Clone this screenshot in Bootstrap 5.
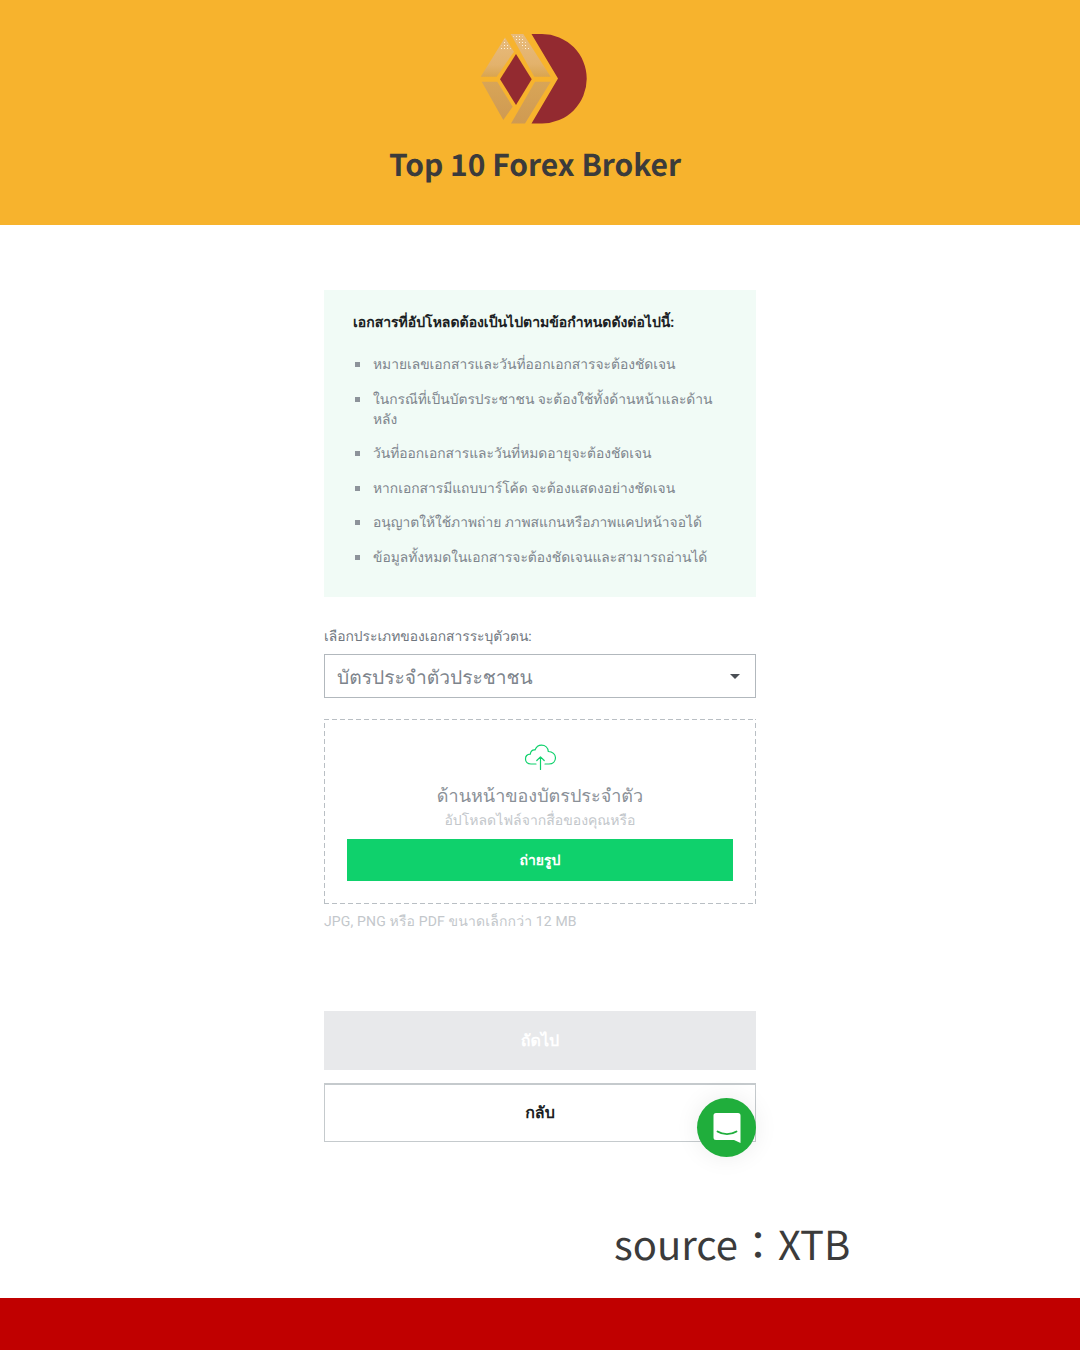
<!DOCTYPE html>
<html lang="th">
<head>
    <meta charset="UTF-8">
    <meta name="viewport" content="width=device-width, initial-scale=1.0">
    <title>Top 10 Forex Broker</title>
    <link href="https://cdn.jsdelivr.net/npm/bootstrap@5.3.2/dist/css/bootstrap.min.css" rel="stylesheet">
    <style>
        body {
            width: 1080px;
            height: 1350px;
            overflow: hidden;
            background: #fff;
            font-family: "Roboto", "Noto Sans", "Liberation Sans", sans-serif;
            text-rendering: geometricPrecision;
        }
        .top-band {
            height: 225px;
            background: #f7b32d;
            padding-top: 34px;
        }
        .top-band svg {
            display: block;
            margin-left: 480px;
        }
        .top-title {
            margin: 17px 0 0 -10px;
            font-family: "Noto Sans CJK SC", sans-serif;
            font-size: 30px;
            line-height: 44px;
            font-weight: 700;
            color: #3b3b3b;
        }
        .form-col {
            width: 432px;
            margin: 65px 0 0 324px;
            position: relative;
        }
        .req-panel {
            height: 307px;
            background: #f1fbf6;
            padding: 23px 29px;
        }
        .req-title {
            font-size: 14px;
            line-height: 20px;
            font-weight: 700;
            color: #1c1f24;
            margin-bottom: 22px;
        }
        .req-list {
            list-style: none;
            padding: 0;
            margin: 0;
        }
        .req-list li {
            position: relative;
            padding-left: 20px;
            margin-bottom: 14.5px;
            font-size: 13.8px;
            line-height: 20px;
            color: #7d848c;
        }
        .req-list li::before {
            content: "";
            position: absolute;
            left: 2px;
            top: 7px;
            width: 5px;
            height: 5px;
            background: #8d939a;
        }
        .doc-label {
            margin: 30px 0 7px;
            font-size: 13.8px;
            line-height: 20px;
            color: #6f767e;
        }
        .doc-select {
            height: 44px;
            border: 1px solid #b2b8bd;
            padding: 0 13px 0 12px;
            font-size: 19.2px;
            line-height: 44px;
            color: #7d848c;
        }
        .doc-select span {
            padding-top: 4px;
        }
        .doc-select i {
            border-left: 5px solid transparent;
            border-right: 5px solid transparent;
            border-top: 5px solid #4a4f55;
            margin-right: 2px;
        }
        .drop-zone {
            height: 185px;
            margin-top: 21px;
            padding: 25px 23px 0;
            text-align: center;
            /* longer dashes than border: dashed gives */
            background-image:
                repeating-linear-gradient(90deg, #b9bfc4 0 5px, transparent 5px 8px),
                repeating-linear-gradient(90deg, #b9bfc4 0 5px, transparent 5px 8px),
                repeating-linear-gradient(0deg, #b9bfc4 0 5px, transparent 5px 8px),
                repeating-linear-gradient(0deg, #b9bfc4 0 5px, transparent 5px 8px);
            background-size: 100% 1px, 100% 1px, 1px 100%, 1px 100%;
            background-position: 0 0, 0 100%, 0 0, 100% 0;
            background-repeat: no-repeat;
        }
        .drop-zone svg {
            display: block;
            margin: 0 auto;
        }
        .drop-title {
            margin-top: 13px;
            font-size: 18px;
            line-height: 28px;
            color: #8a9097;
        }
        .drop-sub {
            font-size: 14px;
            line-height: 20px;
            color: #c3c7cb;
        }
        .shot-btn {
            height: 42px;
            margin-top: 8px;
            background: #0fd16c;
            color: #fff;
            font-size: 14px;
            font-weight: 700;
            line-height: 44px;
        }
        .file-hint {
            margin-top: 8px;
            font-size: 14px;
            letter-spacing: .15px;
            line-height: 20px;
            color: #c3c7cb;
        }
        .next-btn {
            height: 59px;
            margin-top: 79px;
            background: #e8e9eb;
            color: #fff;
            font-size: 16px;
            font-weight: 700;
            line-height: 59px;
            text-align: center;
        }
        .back-btn {
            height: 59px;
            margin-top: 13px;
            border: 1px solid #c5cacd;
            border-top-width: 2px;
            color: #1c1f24;
            font-size: 16px;
            font-weight: 700;
            line-height: 55px;
            text-align: center;
        }
        .chat-bubble {
            position: absolute;
            right: 0;
            top: 808px;
            width: 59px;
            height: 59px;
            border-radius: 50%;
            background: #20ae3c;
            box-shadow: 0 0 24px rgba(0, 0, 0, .08);
        }
        .source-line {
            margin: 71px 0 0 614px;
            font-family: "Noto Sans CJK TC", sans-serif;
            font-size: 40px;
            line-height: 60px;
            color: #3b3b3b;
            white-space: nowrap;
        }
        .bottom-band {
            position: absolute;
            left: 0;
            right: 0;
            top: 1298px;
            height: 52px;
            background: #c00000;
        }
    </style>
</head>
<body>

    <!-- Header -->
    <header class="top-band text-center">
        <svg width="108" height="90" viewBox="480 34 108 90" aria-label="Top 10 Forex Broker logo">
            <defs>
                <linearGradient id="goldTop" x1="0" y1="0" x2="0" y2="1">
                    <stop offset="0" stop-color="#e8bb7c"/>
                    <stop offset=".7" stop-color="#e3b26c"/>
                    <stop offset="1" stop-color="#d9a550"/>
                </linearGradient>
                <linearGradient id="goldLow" x1="0" y1="0" x2="0" y2="1">
                    <stop offset="0" stop-color="#d8a557"/>
                    <stop offset="1" stop-color="#cf9a52"/>
                </linearGradient>
                <pattern id="whiteDots" width="3" height="3" patternUnits="userSpaceOnUse">
                    <rect width="1" height="1" fill="#fff3dc"/>
                </pattern>
            </defs>
            <path d="M531.5 34 H542 A44.7 44.7 0 0 1 542 123.5 H531.5 L558 78.5 Z" fill="#932a30"/>
            <path d="M516 54 L531.7 79.3 L516 105 L500 79.3 Z" fill="#932a30"/>
            <path d="M505 37.5 L514 51.7 L496.7 76.7 L480.7 76.7 Z" fill="url(#goldTop)"/>
            <path d="M510.7 34 H523.3 L550.7 76.7 H534.3 Z" fill="url(#goldTop)"/>
            <path d="M481.7 81.7 H497.3 L512.7 106.7 L503.3 120 Z" fill="url(#goldLow)"/>
            <path d="M535 81.7 H550.7 L525 123.5 H511 Z" fill="url(#goldLow)"/>
            <path d="M513 36 H522 L530 50 H524 Z" fill="url(#whiteDots)"/>
            <path d="M505 39 L511 49 H500 Z" fill="url(#whiteDots)"/>
        </svg>
        <h1 class="top-title">Top 10 Forex Broker</h1>
    </header>

    <main class="form-col">
        <section class="req-panel">
            <div class="req-title">เอกสารที่อัปโหลดต้องเป็นไปตามข้อกำหนดดังต่อไปนี้:</div>
            <ul class="req-list">
                <li>หมายเลขเอกสารและวันที่ออกเอกสารจะต้องชัดเจน</li>
                <li>ในกรณีที่เป็นบัตรประชาชน จะต้องใช้ทั้งด้านหน้าและด้านหลัง</li>
                <li>วันที่ออกเอกสารและวันที่หมดอายุจะต้องชัดเจน</li>
                <li>หากเอกสารมีแถบบาร์โค้ด จะต้องแสดงอย่างชัดเจน</li>
                <li>อนุญาตให้ใช้ภาพถ่าย ภาพสแกนหรือภาพแคปหน้าจอได้</li>
                <li>ข้อมูลทั้งหมดในเอกสารจะต้องชัดเจนและสามารถอ่านได้</li>
            </ul>
        </section>

        <div class="doc-label">เลือกประเภทของเอกสารระบุตัวตน:</div>
        <div class="doc-select d-flex align-items-center justify-content-between">
            <span>บัตรประจำตัวประชาชน</span>
            <i></i>
        </div>

        <div class="drop-zone">
            <!-- upload cloud -->
            <svg width="33" height="26" viewBox="0 0 33 26" fill="none" stroke="#0fd16c" stroke-width="1.2" stroke-linecap="round" stroke-linejoin="round">
                <path d="M12 20 H7 C3.500 20 1.500 17.700 1.500 15 C1.500 12.300 3.500 10.300 6.300 10.200 C6.800 6.800 9 5.800 11 6 C12.300 2.800 14.800 1.200 17.500 1.200 C21.300 1.200 24 4 24.300 7.500 C28.500 7.600 31.500 10.300 31.500 13.800 C31.500 17.400 28.800 20 25 20 H21"/>
                <path d="M16.500 25.500 V13 M12.800 16.500 L16.500 12.800 L20.200 16.500"/>
            </svg>
            <div class="drop-title">ด้านหน้าของบัตรประจำตัว</div>
            <div class="drop-sub">อัปโหลดไฟล์จากสื่อของคุณหรือ</div>
            <div class="shot-btn">ถ่ายรูป</div>
        </div>
        <div class="file-hint">JPG, PNG หรือ PDF ขนาดเล็กกว่า 12 MB</div>

        <div class="next-btn">ถัดไป</div>
        <div class="back-btn">กลับ</div>

        <div class="chat-bubble d-flex align-items-center justify-content-center">
            <svg width="28" height="32" viewBox="0 0 28 32">
                <path d="M3 1 H25 A2.500 2.500 0 0 1 27.500 3.500 V31 L21 28 H3 A2.500 2.500 0 0 1 .5 25.500 V3.500 A2.500 2.500 0 0 1 3 1 Z" fill="#fff"/>
                <path d="M4.500 19.500 C10 23 18 23 23.500 19.500" fill="none" stroke="#20ae3c" stroke-width="1.800" stroke-linecap="round"/>
            </svg>
        </div>
    </main>

    <div class="source-line">source：XTB</div>
    <div class="bottom-band"></div>

    <script src="https://cdn.jsdelivr.net/npm/bootstrap@5.3.2/dist/js/bootstrap.bundle.min.js"></script>
</body>
</html>
